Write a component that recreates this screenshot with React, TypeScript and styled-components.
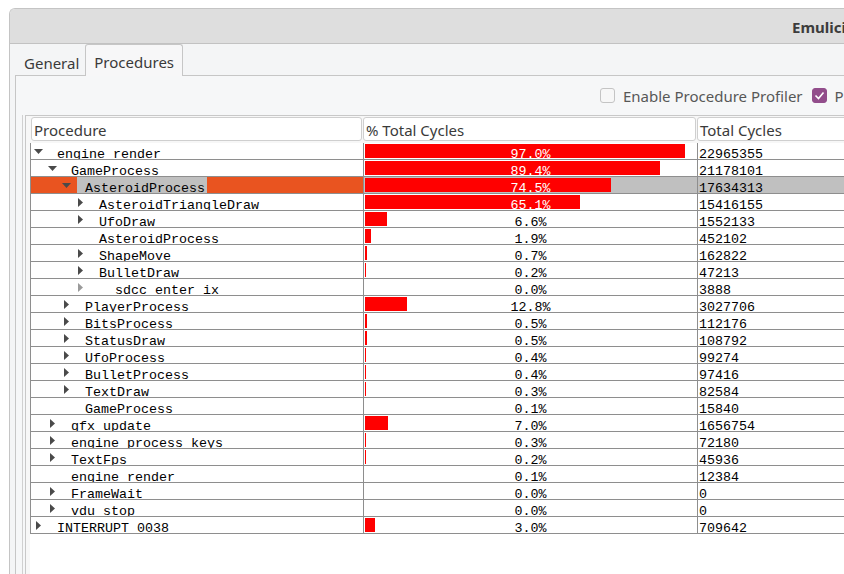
import React from "react";
import styled, { createGlobalStyle } from "styled-components";

const GlobalStyle = createGlobalStyle`
  html, body {
    margin: 0;
    padding: 0;
    background: #ffffff;
    overflow: hidden;
  }
`;

const Page = styled.div`
  height: 574px;
  padding: 8px 0 0 9px;
  box-sizing: border-box;
  overflow: hidden;
  background: #ffffff;
  font-family: "Noto Sans", sans-serif;
`;

const Window = styled.div`
  width: 900px;
  height: 100%;
  display: flex;
  flex-direction: column;
  border-top: 1px solid #c4c4c4;
  border-left: 1px solid #c4c4c4;
  border-radius: 6px 0 0 0;
  overflow: hidden;
  background: #f4f5f6;
`;

const TitleBar = styled.div`
  flex: none;
  height: 35px;
  display: flex;
  align-items: center;
  padding: 2px 0 0 782px;
  box-sizing: border-box;
  background: #dedede;
  border-bottom: 1px solid #c2c2c2;
  font-size: 15px;
  font-weight: bold;
  color: #3c3c3c;
  white-space: nowrap;
`;

const Body = styled.div`
  flex: 1;
  display: flex;
  flex-direction: column;
  padding-left: 5px;
  min-height: 0;
`;

const TabBar = styled.div`
  flex: none;
  height: 32px;
  display: flex;
`;

const Tab = styled.div<{ $active?: boolean }>`
  display: flex;
  align-items: center;
  box-sizing: border-box;
  font-size: 15px;
  color: #3a3a3a;
  white-space: nowrap;
  ${(p) =>
    p.$active
      ? `
    padding: 3px 8px 0;
    background: #f7f7f8;
    border: 1px solid #c6c6c6;
    border-bottom: none;
    border-radius: 3px 3px 0 0;
  `
      : `
    padding: 7px 6px 0 9px;
    border-bottom: 1px solid #c6c6c6;
  `}
`;

const TabFiller = styled.div`
  flex: 1;
  border-bottom: 1px solid #c6c6c6;
`;

const Pane = styled.div`
  flex: 1;
  display: flex;
  flex-direction: column;
  border-left: 1px solid #c6c6c6;
  background: #f6f7f8;
  min-height: 0;
`;

const CheckRow = styled.div`
  flex: none;
  height: 39px;
  display: flex;
  align-items: center;
  padding-left: 584px;
  gap: 8px;
  white-space: nowrap;
  font-size: 15px;
  color: #575757;
`;

const Box = styled.span<{ $checked?: boolean }>`
  flex: none;
  width: 15px;
  height: 15px;
  box-sizing: border-box;
  border-radius: 3px;
  display: flex;
  align-items: center;
  justify-content: center;
  border: 1px solid ${(p) => (p.$checked ? "#924d8b" : "#c4c4c4")};
  background: ${(p) => (p.$checked ? "#924d8b" : "#f7f7f7")};
`;

const CheckLabel = styled.span`
  margin-right: 1px;
`;

const Group = styled.div`
  flex: 1;
  display: flex;
  margin-left: 6px;
  border-left: 1px solid #d0d0d0;
  min-height: 0;
`;

const Frame = styled.div`
  flex: 1;
  display: flex;
  flex-direction: column;
  margin-left: 2px;
  border-left: 1px solid #c8c8c8;
  border-top: 1px solid #c8c8c8;
  background: #f7f7f7;
  min-height: 0;
`;

const HeaderRow = styled.div`
  flex: none;
  display: flex;
  gap: 1px;
  padding: 1px 0 2px 5px;
`;

const HeaderCell = styled.div<{ $w: number }>`
  flex: none;
  width: ${(p) => p.$w}px;
  height: 24px;
  box-sizing: border-box;
  display: flex;
  align-items: center;
  padding: 2px 0 0 2px;
  background: #ffffff;
  border: 1px solid #cfcfcf;
  border-radius: 3px;
  font-size: 15px;
  color: #3a3a3a;
  white-space: nowrap;
`;

const TableBody = styled.div`
  flex: 1;
  margin-left: 4px;
  background: #ffffff;
  font-family: "Liberation Mono", "DejaVu Sans Mono", monospace;
  font-size: 13.33px;
  color: #000000;
`;

const Row = styled.div`
  display: grid;
  grid-template-columns: 333px 334px 1fr;
  height: 17px;
  box-sizing: border-box;
  border-bottom: 1px solid #8e8e8e;
`;

const Cell = styled.div<{ $bg?: string }>`
  position: relative;
  height: 16px;
  border-left: 1px solid #8e8e8e;
  background: ${(p) => p.$bg || "transparent"};
  overflow: hidden;
  white-space: nowrap;
`;

const TreeCell = styled(Cell)<{ $level: number }>`
  display: flex;
  padding-left: ${(p) => 1 + p.$level * 14}px;
`;

const ArrowSlot = styled.span<{ $faint?: boolean }>`
  flex: none;
  width: 12px;
  display: flex;
  align-items: center;
  justify-content: center;
  padding-top: 1px;
  color: ${(p) => (p.$faint ? "#9a9a9a" : "#4a4a4a")};
`;

const Label = styled.span<{ $sel?: boolean; $extra?: number }>`
  margin-left: 5px;
  padding: 0 2px 0 ${(p) => 8 + (p.$extra || 0)}px;
  height: 16px;
  overflow: hidden;
  line-height: 24px;
  background: ${(p) => (p.$sel ? "#c0c0c0" : "transparent")};
`;

const Bar = styled.span`
  position: absolute;
  left: 1px;
  top: 1px;
  height: 14px;
  background: #ff0000;
`;

const PctText = styled.span<{ $light?: boolean }>`
  position: relative;
  display: block;
  height: 16px;
  text-align: center;
  line-height: 24px;
  color: ${(p) => (p.$light ? "#ffffff" : "#000000")};
`;

const Num = styled.span`
  display: block;
  height: 16px;
  padding-left: 1px;
  line-height: 24px;
`;

type Proc = {
  name: string;
  level: number;
  arrow?: "down" | "right";
  pct: number;
  cycles: number;
  sel?: boolean;
  faint?: boolean;
  extra?: number;
};

const rows: Proc[] = [
  { name: "engine_render", level: 0, arrow: "down", pct: 97.0, cycles: 22965355 },
  { name: "GameProcess", level: 1, arrow: "down", pct: 89.4, cycles: 21178101 },
  { name: "AsteroidProcess", level: 2, arrow: "down", pct: 74.5, cycles: 17634313, sel: true },
  { name: "AsteroidTriangleDraw", level: 3, arrow: "right", pct: 65.1, cycles: 15416155 },
  { name: "UfoDraw", level: 3, arrow: "right", pct: 6.6, cycles: 1552133 },
  { name: "AsteroidProcess", level: 3, pct: 1.9, cycles: 452102 },
  { name: "ShapeMove", level: 3, arrow: "right", pct: 0.7, cycles: 162822 },
  { name: "BulletDraw", level: 3, arrow: "right", pct: 0.2, cycles: 47213 },
  { name: "sdcc_enter_ix", level: 3, arrow: "right", pct: 0.0, cycles: 3888, faint: true, extra: 16 },
  { name: "PlayerProcess", level: 2, arrow: "right", pct: 12.8, cycles: 3027706 },
  { name: "BitsProcess", level: 2, arrow: "right", pct: 0.5, cycles: 112176 },
  { name: "StatusDraw", level: 2, arrow: "right", pct: 0.5, cycles: 108792 },
  { name: "UfoProcess", level: 2, arrow: "right", pct: 0.4, cycles: 99274 },
  { name: "BulletProcess", level: 2, arrow: "right", pct: 0.4, cycles: 97416 },
  { name: "TextDraw", level: 2, arrow: "right", pct: 0.3, cycles: 82584 },
  { name: "GameProcess", level: 2, pct: 0.1, cycles: 15840 },
  { name: "gfx_update", level: 1, arrow: "right", pct: 7.0, cycles: 1656754 },
  { name: "engine_process_keys", level: 1, arrow: "right", pct: 0.3, cycles: 72180 },
  { name: "TextFps", level: 1, arrow: "right", pct: 0.2, cycles: 45936 },
  { name: "engine_render", level: 1, pct: 0.1, cycles: 12384 },
  { name: "FrameWait", level: 1, arrow: "right", pct: 0.0, cycles: 0 },
  { name: "vdu_stop", level: 1, arrow: "right", pct: 0.0, cycles: 0 },
  { name: "INTERRUPT_0038", level: 0, arrow: "right", pct: 3.0, cycles: 709642 },
];

const Arrow = ({ dir }: { dir: "down" | "right" }) =>
  dir === "down" ? (
    <svg width="9" height="5" viewBox="0 0 9 5">
      <path d="M0 0h9L4.5 5z" fill="currentColor" />
    </svg>
  ) : (
    <svg width="5" height="9" viewBox="0 0 5 9">
      <path d="M0 0v9l5-4.5z" fill="currentColor" />
    </svg>
  );

const Check = () => (
  <svg width="11" height="9" viewBox="0 0 11 9">
    <path d="M1.5 4.5l3 3 5-6" stroke="#ffffff" strokeWidth="1.6" fill="none" />
  </svg>
);

export default function App() {
  return (
    <Page>
      <GlobalStyle />
      <Window>
        <TitleBar>Emulicious</TitleBar>
        <Body>
          <TabBar>
            <Tab>General</Tab>
            <Tab $active>Procedures</Tab>
            <TabFiller />
          </TabBar>
          <Pane>
            <CheckRow>
              <Box />
              <CheckLabel>Enable Procedure Profiler</CheckLabel>
              <Box $checked>
                <Check />
              </Box>
              <CheckLabel>Profile Interrupts</CheckLabel>
            </CheckRow>
            <Group>
              <Frame>
                <HeaderRow>
                  <HeaderCell $w={331}>Procedure</HeaderCell>
                  <HeaderCell $w={333}>% Total Cycles</HeaderCell>
                  <HeaderCell $w={220}>Total Cycles</HeaderCell>
                </HeaderRow>
                <TableBody>
                  {rows.map((r, i) => {
                    const w = Math.round(r.pct * 3.3);
                    return (
                      <Row key={i}>
                        <TreeCell $level={r.level} $bg={r.sel ? "#e95420" : undefined}>
                          <ArrowSlot $faint={r.faint}>{r.arrow && <Arrow dir={r.arrow} />}</ArrowSlot>
                          <Label $sel={r.sel} $extra={r.extra}>
                            {r.name}
                          </Label>
                        </TreeCell>
                        <Cell $bg={r.sel ? "#c0c0c0" : undefined}>
                          {w > 0 && <Bar style={{ width: w }} />}
                          <PctText $light={r.pct > 50}>{r.pct.toFixed(1)}%</PctText>
                        </Cell>
                        <Cell $bg={r.sel ? "#c0c0c0" : undefined}>
                          <Num>{r.cycles}</Num>
                        </Cell>
                      </Row>
                    );
                  })}
                </TableBody>
              </Frame>
            </Group>
          </Pane>
        </Body>
      </Window>
    </Page>
  );
}
